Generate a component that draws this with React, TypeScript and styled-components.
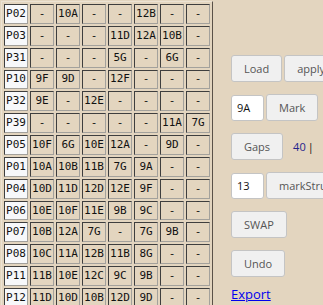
import React from "react";
import styled, { createGlobalStyle } from "styled-components";

const GlobalStyle = createGlobalStyle`
  html, body {
    margin: 0;
    padding: 0;
    overflow: hidden;
    background: #e3d5bf;
  }
`;

const rows: [string, string[]][] = [
  ["P02", ["-", "10A", "-", "-", "12B", "-", "-"]],
  ["P03", ["-", "-", "-", "11D", "12A", "10B", "-"]],
  ["P31", ["-", "-", "-", "5G", "-", "6G", "-"]],
  ["P10", ["9F", "9D", "-", "12F", "-", "-", "-"]],
  ["P32", ["9E", "-", "12E", "-", "-", "-", "-"]],
  ["P39", ["-", "-", "-", "-", "-", "11A", "7G"]],
  ["P05", ["10F", "6G", "10E", "12A", "-", "9D", "-"]],
  ["P01", ["10A", "10B", "11B", "7G", "9A", "-", "-"]],
  ["P04", ["10D", "11D", "12D", "12E", "9F", "-", "-"]],
  ["P06", ["10E", "10F", "11E", "9B", "9C", "-", "-"]],
  ["P07", ["10B", "12A", "7G", "-", "7G", "9B", "-"]],
  ["P08", ["10C", "11A", "12B", "11B", "8G", "-", "-"]],
  ["P11", ["11B", "10E", "12C", "9C", "9B", "-", "-"]],
  ["P12", ["11D", "10D", "10B", "12D", "9D", "-", "-"]],
];

const App = () => {
  return (
    <>
      <GlobalStyle />
      <Page>
        <Grid>
          <tbody>
            {rows.map(([name, slots]) => (
              <tr key={name}>
                <Cell $head>{name}</Cell>
                {slots.map((s, i) => (
                  <Cell key={i}>{s}</Cell>
                ))}
              </tr>
            ))}
          </tbody>
        </Grid>
        <Panel>
          <Line>
            <Button>Load</Button>
            <Button>apply</Button>
          </Line>
          <Line>
            <Field defaultValue="9A" />
            <Button>Mark</Button>
          </Line>
          <Line>
            <Button>Gaps</Button>
            <Count>
              40<Caret>|</Caret>
            </Count>
          </Line>
          <Line>
            <Field defaultValue="13" />
            <Button>markStruct</Button>
          </Line>
          <Line>
            <Button>SWAP</Button>
          </Line>
          <Line>
            <Button>Undo</Button>
          </Line>
          <ExportLink href="#">Export</ExportLink>
        </Panel>
      </Page>
    </>
  );
};

const Page = styled.div`
  display: flex;
  flex-direction: row;
  align-items: flex-start;
  width: 323px;
  height: 305px;
  overflow: hidden;
`;

const Grid = styled.table`
  flex: none;
  margin: 1px 0 0 1px;
  border-collapse: separate;
  border-spacing: 2px;
  border-top: 1px solid #ece3d4;
  border-left: 1px solid #ece3d4;
  border-right: 1px solid #5a5148;
  border-bottom: 1px solid #5a5148;
`;

const Cell = styled.td<{ $head?: boolean }>`
  box-sizing: border-box;
  width: 24px;
  min-width: 24px;
  height: 19.85px;
  padding: 0;
  text-align: center;
  vertical-align: middle;
  font-family: "DejaVu Sans Mono", monospace;
  font-size: 11px;
  line-height: 12px;
  color: #111;
  white-space: nowrap;
  background: ${(p) => (p.$head ? "#f7f8fa" : "#e3d5bf")};
  border-top: 1px solid #3e3e3e;
  border-left: 1px solid #3e3e3e;
  border-right: 1px solid #a3a19c;
  border-bottom: 1px solid #a3a19c;
`;

const Panel = styled.div`
  flex: none;
  display: flex;
  flex-direction: column;
  gap: 12px;
  padding: 55px 0 0 18px;
  font-family: "Open Sans", sans-serif;
`;

const Line = styled.div`
  display: flex;
  flex-direction: row;
  align-items: center;
  gap: 2px;
  white-space: nowrap;
`;

const Button = styled.button`
  box-sizing: border-box;
  height: 27px;
  padding: 0 12px;
  font-family: "Open Sans", sans-serif;
  font-size: 11px;
  color: #555;
  background: #f0f0f0;
  border: 1px solid #c4c4c4;
  border-radius: 3px;
  white-space: nowrap;
`;

const Field = styled.input`
  box-sizing: border-box;
  width: 33px;
  height: 26px;
  padding: 0 5px;
  font-family: "Open Sans", sans-serif;
  font-size: 11px;
  color: #111;
  background: #fff;
  border: 1px solid #c4c4c4;
  border-radius: 3px;
  outline: none;
`;

const Count = styled.span`
  margin-left: 8px;
  font-size: 11px;
  color: #23238c;
`;

const Caret = styled.span`
  margin-left: 2px;
  color: #111;
`;

const ExportLink = styled.a`
  align-self: flex-start;
  margin-top: -4px;
  font-size: 13px;
  color: #0000ee;
  text-decoration: underline;
`;

export default App;
